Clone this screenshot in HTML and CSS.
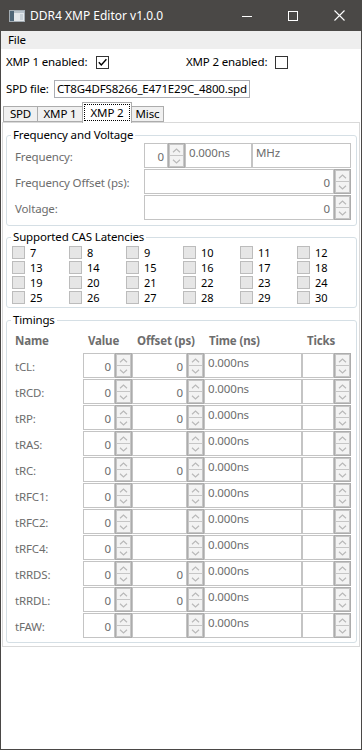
FILE: index.html
```html
<!DOCTYPE html>
<html>
<head>
<meta charset="utf-8">
<title>DDR4 XMP Editor v1.0.0</title>
<link rel="stylesheet" href="styles.css">
</head>
<body>
<div class="window">
  <div class="titlebar">
    <svg class="appicon" width="16" height="12" viewBox="0 0 16 12">
      <rect x="0.5" y="0.5" width="15" height="11" fill="#e4e8eb" stroke="#a3acb3"/>
      <rect x="1" y="1" width="4" height="10" fill="#4f6677"/>
      <rect x="5" y="1" width="10" height="2" fill="#b9c3ca"/>
      <rect x="11" y="4" width="3" height="6" fill="#c9d1d6"/>
    </svg>
    <span class="title">DDR4 XMP Editor v1.0.0</span>
    <div class="controls">
      <div class="ctl"><svg width="10" height="10" viewBox="0 0 10 10"><line x1="0" y1="5.5" x2="10" y2="5.5" stroke="#fff" stroke-width="1"/></svg></div>
      <div class="ctl"><svg width="10" height="10" viewBox="0 0 10 10"><rect x="0.5" y="0.5" width="9" height="9" fill="none" stroke="#fff" stroke-width="1"/></svg></div>
      <div class="ctl"><svg width="11" height="11" viewBox="0 0 11 11"><path d="M0.5 0.5 L10.5 10.5 M10.5 0.5 L0.5 10.5" stroke="#fff" stroke-width="1.1"/></svg></div>
    </div>
  </div>
  <div class="frame">
    <div class="menubar"><span>File</span></div>
    <div class="enable-row">
      <span>XMP 1 enabled:</span>
      <span class="cb"><svg width="11" height="11" viewBox="0 0 11 11"><path d="M1.8 5.2 L4.3 8 L9.4 2.2" fill="none" stroke="#000" stroke-width="1.4"/></svg></span>
      <span></span>
      <span>XMP 2 enabled:</span>
      <span class="cb"></span>
    </div>
    <div class="spd-row">
      <span class="spd-label">SPD file:</span>
      <div class="textbox">CT8G4DFS8266_E471E29C_4800.spd</div>
    </div>
    <div class="tabs">
      <div class="tab t-spd">SPD</div>
      <div class="tab t-x1">XMP 1</div>
      <div class="tab t-x2 selected"><span class="focus">XMP 2</span></div>
      <div class="tab t-misc">Misc</div>
    </div>
    <div class="panel">
      <fieldset class="group g-freq">
        <legend>Frequency and Voltage</legend>
        <div class="frow">
          <span class="lbl">Frequency:</span>
          <div class="num w-freq"><div class="in">0</div><div class="spin"><div class="sb"><svg width="9" height="5" viewBox="0 0 9 5"><polyline points="1,4.2 4.5,1 8,4.2" fill="none" stroke="#b9b9b9" stroke-width="1.2"/></svg></div><div class="sb"><svg width="9" height="5" viewBox="0 0 9 5"><polyline points="1,0.8 4.5,4 8,0.8" fill="none" stroke="#b9b9b9" stroke-width="1.2"/></svg></div></div></div>
          <div class="box w-ns">0.000ns</div>
          <div class="box w-mhz">MHz</div>
        </div>
        <div class="frow">
          <span class="lbl">Frequency Offset (ps):</span>
          <div class="num w-wide"><div class="in">0</div><div class="spin"><div class="sb"><svg width="9" height="5" viewBox="0 0 9 5"><polyline points="1,4.2 4.5,1 8,4.2" fill="none" stroke="#b9b9b9" stroke-width="1.2"/></svg></div><div class="sb"><svg width="9" height="5" viewBox="0 0 9 5"><polyline points="1,0.8 4.5,4 8,0.8" fill="none" stroke="#b9b9b9" stroke-width="1.2"/></svg></div></div></div>
        </div>
        <div class="frow">
          <span class="lbl">Voltage:</span>
          <div class="num w-wide"><div class="in">0</div><div class="spin"><div class="sb"><svg width="9" height="5" viewBox="0 0 9 5"><polyline points="1,4.2 4.5,1 8,4.2" fill="none" stroke="#b9b9b9" stroke-width="1.2"/></svg></div><div class="sb"><svg width="9" height="5" viewBox="0 0 9 5"><polyline points="1,0.8 4.5,4 8,0.8" fill="none" stroke="#b9b9b9" stroke-width="1.2"/></svg></div></div></div>
        </div>
      </fieldset>

      <fieldset class="group g-cas">
        <legend>Supported CAS Latencies</legend>
        <div class="casgrid">
          <div class="cas"><span class="dcb"></span>7</div>
          <div class="cas"><span class="dcb"></span>8</div>
          <div class="cas"><span class="dcb"></span>9</div>
          <div class="cas"><span class="dcb"></span>10</div>
          <div class="cas"><span class="dcb"></span>11</div>
          <div class="cas"><span class="dcb"></span>12</div>
          <div class="cas"><span class="dcb"></span>13</div>
          <div class="cas"><span class="dcb"></span>14</div>
          <div class="cas"><span class="dcb"></span>15</div>
          <div class="cas"><span class="dcb"></span>16</div>
          <div class="cas"><span class="dcb"></span>17</div>
          <div class="cas"><span class="dcb"></span>18</div>
          <div class="cas"><span class="dcb"></span>19</div>
          <div class="cas"><span class="dcb"></span>20</div>
          <div class="cas"><span class="dcb"></span>21</div>
          <div class="cas"><span class="dcb"></span>22</div>
          <div class="cas"><span class="dcb"></span>23</div>
          <div class="cas"><span class="dcb"></span>24</div>
          <div class="cas"><span class="dcb"></span>25</div>
          <div class="cas"><span class="dcb"></span>26</div>
          <div class="cas"><span class="dcb"></span>27</div>
          <div class="cas"><span class="dcb"></span>28</div>
          <div class="cas"><span class="dcb"></span>29</div>
          <div class="cas"><span class="dcb"></span>30</div>
        </div>
      </fieldset>

      <fieldset class="group g-tim">
        <legend>Timings</legend>
        <div class="tgrid" id="tgrid">
          <div class="th">Name</div>
          <div class="th">Value</div>
          <div class="th">Offset (ps)</div>
          <div class="th">Time (ns)</div>
          <div class="th">Ticks</div>
        </div>
      </fieldset>
    </div>
  </div>
</div>
<script src="app.js"></script>
</body>
</html>
```

FILE: app.js
```js
(function () {
  var rows = [
    ["tCL:", "0", "0"],
    ["tRCD:", "0", "0"],
    ["tRP:", "0", "0"],
    ["tRAS:", "0", ""],
    ["tRC:", "0", "0"],
    ["tRFC1:", "0", ""],
    ["tRFC2:", "0", ""],
    ["tRFC4:", "0", ""],
    ["tRRDS:", "0", "0"],
    ["tRRDL:", "0", "0"],
    ["tFAW:", "0", ""]
  ];
  var up = '<svg width="9" height="5" viewBox="0 0 9 5"><polyline points="1,4.2 4.5,1 8,4.2" fill="none" stroke="#b9b9b9" stroke-width="1.2"/></svg>';
  var dn = '<svg width="9" height="5" viewBox="0 0 9 5"><polyline points="1,0.8 4.5,4 8,0.8" fill="none" stroke="#b9b9b9" stroke-width="1.2"/></svg>';
  function num(v) {
    return '<div class="num"><div class="in">' + v + '</div><div class="spin"><div class="sb">' + up + '</div><div class="sb">' + dn + '</div></div></div>';
  }
  var html = "";
  rows.forEach(function (r) {
    html += '<div class="tname">' + r[0] + '</div>' + num(r[1]) + num(r[2]) +
      '<div class="box">0.000ns</div>' + num("");
  });
  document.getElementById("tgrid").insertAdjacentHTML("beforeend", html);
})();
```

FILE: styles.css
```css
* { box-sizing: border-box; margin: 0; padding: 0; }
html, body { width: 362px; height: 750px; overflow: hidden; }
body {
  font-family: "Noto Sans", "Open Sans", sans-serif;
  font-size: 11.5px;
  letter-spacing: -0.15px;
  line-height: 16px;
  color: #000;
  background: #fff;
}
.window { display: flex; flex-direction: column; height: 750px; }

.titlebar {
  flex: none;
  height: 31px;
  background: #4a4846;
  color: #fff;
  display: flex;
  align-items: center;
}
.appicon { margin-left: 9px; }
.title { margin-left: 5px; font-size: 12px; letter-spacing: 0; }
.controls { margin-left: auto; display: flex; height: 31px; }
.ctl { width: 46px; height: 31px; display: flex; align-items: center; justify-content: center; }

.frame {
  flex: 1;
  border: 1px solid #4a4846;
  border-top: none;
  display: flex;
  flex-direction: column;
}
.menubar {
  height: 18px;
  background: #eeeeee;
  padding-left: 7px;
  display: flex;
  align-items: center;
}

.enable-row {
  margin-top: 5px;
  padding-left: 5px;
  height: 16px;
  display: grid;
  grid-template-columns: 90px 13px 77px 89px 13px;
  align-items: center;
}
.cb {
  width: 13px; height: 13px;
  border: 1px solid #333;
  background: #fff;
  display: flex; align-items: center; justify-content: center;
}

.spd-row {
  margin-top: 10px;
  padding-left: 5px;
  height: 18px;
  display: flex;
  align-items: center;
}
.spd-label { width: 48px; }
.textbox {
  width: 196px; height: 18px;
  border: 1px solid #abadb3;
  padding-left: 2px;
  line-height: 16px;
  white-space: nowrap;
  overflow: hidden;
}

.tabs {
  margin-top: 4px;
  margin-left: 2px;
  height: 20px;
  display: flex;
  align-items: flex-end;
}
.tab {
  height: 16px;
  border: 1px solid #acacac;
  background: #f0f0f0;
  display: flex;
  align-items: center;
  justify-content: center;
  line-height: 14px;
}
.t-spd { width: 35px; }
.t-x1 { width: 46px; margin-left: -1px; }
.t-x2 { width: 50px; margin-left: -1px; }
.t-misc { width: 33px; margin-left: -1px; }
.tab.selected {
  height: 21px;
  margin-bottom: -1px;
  background: #fff;
  border-bottom: none;
  position: relative;
  z-index: 1;
  padding: 1px 1px 2px;
}
.focus {
  flex: 1;
  align-self: stretch;
  border: 1px dotted #000;
  display: flex; align-items: center; justify-content: center;
}

.panel {
  margin: 0 1px;
  border: 1px solid #d9d9d9;
  padding: 4px 2px 3px 3px;
}

.group {
  border: 1px solid #d5dfe5;
  border-radius: 3px;
  padding: 0 5px 5px 8px;
  min-width: 0;
}
.group legend {
  margin-left: -4px;
  padding: 0 2px;
  line-height: 16px;
  color: #000;
}
.g-cas { margin-top: 3px; padding: 0 5px 2px 5px; }
.g-cas legend { margin-left: -1px; }
.g-tim { margin-top: 4px; padding-bottom: 4px; }

.frow { display: flex; height: 25px; }
.frow + .frow { margin-top: 1px; }
.lbl {
  width: 129px;
  color: #6d6d6d;
  display: flex;
  align-items: center;
  padding-top: 2px;
}

.num { display: flex; height: 25px; }
.num .in {
  flex: 1;
  border: 1px solid #c4c4c4;
  color: #6d6d6d;
  display: flex;
  align-items: center;
  justify-content: flex-end;
  padding: 2px 3px 0 0;
}
.spin {
  width: 17px;
  flex: none;
  border: 1px solid #acacac;
  background: #c6c6c6;
  padding: 1px;
  display: flex;
  flex-direction: column;
  gap: 1px;
}
.sb {
  flex: 1;
  background: #f3f3f3;
  display: flex;
  align-items: center;
  justify-content: center;
}
.box {
  border: 1px solid #c4c4c4;
  color: #6d6d6d;
  padding: 1px 0 0 3px;
}
.w-freq { width: 41px; }
.w-ns { width: 67px; }
.w-mhz { width: 99px; }
.w-wide { width: 207px; }

.casgrid {
  display: grid;
  grid-template-columns: repeat(6, 57px);
  grid-auto-rows: 15px;
}
.cas { display: flex; align-items: center; line-height: 14px; font-size: 11px; letter-spacing: 0; padding-top: 1px; }
.dcb {
  width: 13px; height: 13px;
  border: 1px solid #bcbcbc;
  background: #e6e6e6;
  margin-right: 5px;
  margin-top: -1px;
}

.tgrid {
  display: grid;
  grid-template-columns: 68px 49px 72px 98px 49px;
  grid-template-rows: 24px;
  grid-auto-rows: 25px;
  row-gap: 1px;
}
.th {
  font-weight: bold;
  color: #6d6d6d;
  display: flex;
  align-items: center;
  padding-left: 5px;
  padding-top: 1px;
  white-space: nowrap;
}
.th:first-child { padding-left: 0; }
.tname {
  color: #6d6d6d;
  display: flex;
  align-items: center;
  padding-top: 3px;
}
```
